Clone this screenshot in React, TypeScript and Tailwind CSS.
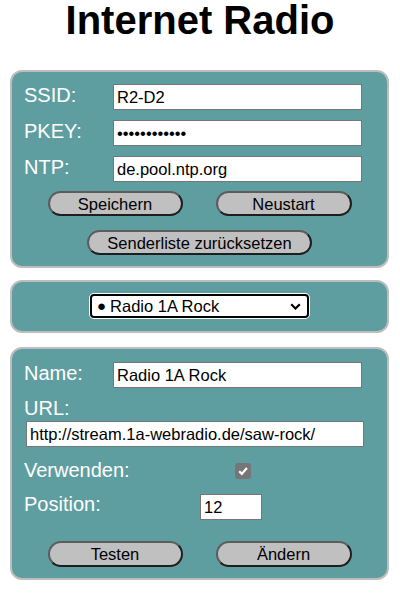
import React from "react";

const font = { fontFamily: '"Liberation Sans", Arial, sans-serif' };

function Btn({ label, w, h = "h-[25px]" }: { label: string; w: string; h?: string }) {
  return (
    <button
      className={`${w} ${h} rounded-full bg-[#c0c0c0] border-2 border-t-[#5c5c5c] border-l-[#5c5c5c] border-r-[#1e1e1e] border-b-[#1e1e1e] text-[16.5px] leading-[20px] text-black flex items-center justify-center`}
    >
      {label}
    </button>
  );
}

function Field({ value, w, type = "text" }: { value: string; w: string; type?: string }) {
  return (
    <input
      type={type}
      readOnly
      value={value}
      className={`${w} h-[26px] bg-white border border-[#767676] px-[3px] text-[16.5px] text-black outline-none`}
    />
  );
}

function Label({ text, w }: { text: string; w?: string }) {
  return <div className={`${w ?? ""} text-[20px] leading-[23px] text-white shrink-0`}>{text}</div>;
}

export default function App() {
  return (
    <div className="w-[400px] h-[593px] bg-white" style={font}>
      <h1 className="text-[40px] font-bold leading-[40px] text-center text-black">Internet Radio</h1>

      {/* Panel 1 */}
      <div className="mt-[30px] ml-[10px] w-[379px] rounded-[12px] border-2 border-[#bdbdbd] bg-[#5f9ea0] pt-[12px] pb-[11px] pl-[12px]">
        <div className="flex flex-col gap-[10px]">
          <div className="flex items-start">
            <Label text="SSID:" w="w-[89px]" />
            <Field value="R2-D2" w="w-[249px]" />
          </div>
          <div className="flex items-start">
            <Label text="PKEY:" w="w-[89px]" />
            <Field value="123456789012" type="password" w="w-[249px]" />
          </div>
          <div className="flex items-start">
            <Label text="NTP:" w="w-[89px]" />
            <Field value="de.pool.ntp.org" w="w-[249px]" />
          </div>
        </div>
        <div className="mt-[9px] flex justify-center gap-[33px] -ml-[12px]">
          <Btn label="Speichern" w="w-[135px]" />
          <Btn label="Neustart" w="w-[136px]" />
        </div>
        <div className="mt-[14px] flex justify-center -ml-[12px]">
          <Btn label="Senderliste zurücksetzen" w="w-[225px]" />
        </div>
      </div>

      {/* Panel 2 */}
      <div className="mt-[12px] ml-[10px] w-[379px] rounded-[12px] border-2 border-[#bdbdbd] bg-[#5f9ea0] pt-[12px] pb-[13px] flex justify-center">
        <div className="w-[219px] h-[24px] bg-white border-2 border-black rounded-[4px] shadow-[0_0_0_1px_#ffffff] flex items-center justify-between pl-[5px] pr-[5px]">
          <span className="text-[16.5px] text-black leading-[20px] flex items-center">
            <span className="text-[15px] leading-[20px] mr-[4px]">●</span>Radio 1A Rock
          </span>
          <svg width="11" height="7" viewBox="0 0 11 7" className="mr-[1px]">
            <path d="M1.2 1.2 L5.5 5.5 L9.8 1.2" fill="none" stroke="#000" strokeWidth="2.2" />
          </svg>
        </div>
      </div>

      {/* Panel 3 */}
      <div className="mt-[14px] ml-[10px] w-[379px] rounded-[12px] border-2 border-[#bdbdbd] bg-[#5f9ea0] pt-[13px] pb-[11px] pl-[12px]">
        <div className="flex items-start">
          <Label text="Name:" w="w-[89px]" />
          <Field value="Radio 1A Rock" w="w-[249px]" />
        </div>
        <div className="mt-[9px]">
          <Label text="URL:" />
        </div>
        <div className="mt-[1px] ml-[2px]">
          <Field value="http://stream.1a-webradio.de/saw-rock/" w="w-[338px]" />
        </div>
        <div className="mt-[12px] flex items-center">
          <Label text="Verwenden:" w="w-[211px]" />
          <div className="w-[16px] h-[16px] rounded-[3px] bg-[#767676] flex items-center justify-center">
            <svg width="12" height="12" viewBox="0 0 12 12">
              <path d="M2.2 6.3 L4.8 8.9 L9.9 3" fill="none" stroke="#fff" strokeWidth="2.2" />
            </svg>
          </div>
        </div>
        <div className="mt-[11px] flex items-start">
          <Label text="Position:" w="w-[176px]" />
          <div className="mt-[1px]">
            <Field value="12" w="w-[62px]" />
          </div>
        </div>
        <div className="mt-[21px] flex justify-center gap-[33px] -ml-[12px]">
          <Btn label="Testen" w="w-[135px]" h="h-[26px]" />
          <Btn label="Ändern" w="w-[136px]" h="h-[26px]" />
        </div>
      </div>
    </div>
  );
}
